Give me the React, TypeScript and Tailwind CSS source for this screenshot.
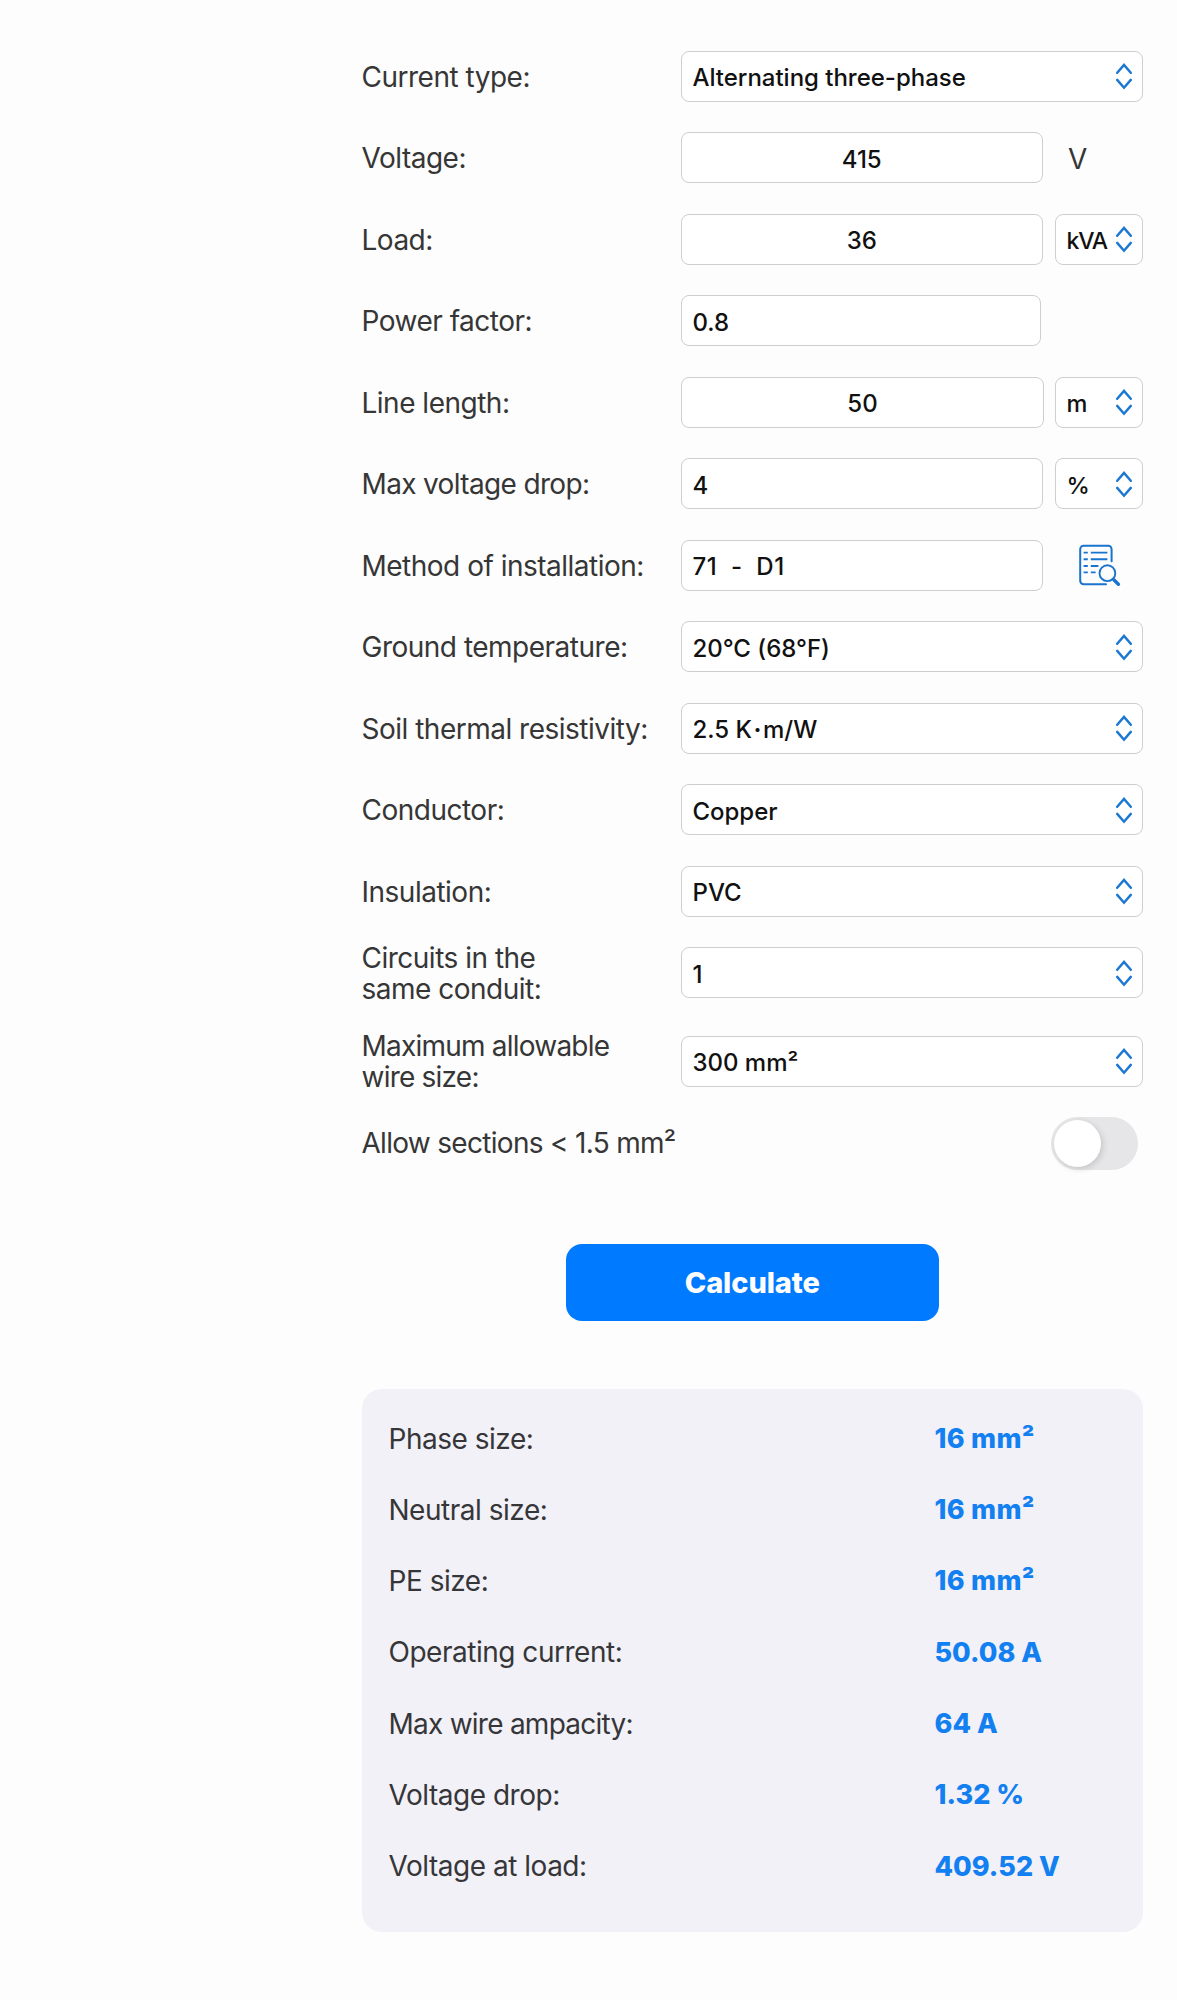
type Row = {
  label: string;
  value: string;
  // narrow input that leaves room for a unit on its right
  inputWidth?: string;
  centered?: boolean;
  unit?: string;
  extra?: "text" | "select" | "lookup";
  tall?: boolean;
  tracking?: string;
};

const rows: Row[] = [
  { label: "Current type:", value: "Alternating three-phase" },
  {
    label: "Voltage:",
    value: "415",
    inputWidth: "w-[361.5px]",
    centered: true,
    unit: "V",
    extra: "text",
  },
  {
    label: "Load:",
    value: "36",
    inputWidth: "w-[361.5px]",
    centered: true,
    unit: "kVA",
    extra: "select",
  },
  { label: "Power factor:", value: "0.8", inputWidth: "w-[360px]" },
  {
    label: "Line length:",
    value: "50",
    inputWidth: "w-[363px]",
    centered: true,
    unit: "m",
    extra: "select",
  },
  {
    label: "Max voltage drop:",
    value: "4",
    inputWidth: "w-[361.5px]",
    unit: "%",
    extra: "select",
    tracking: "tracking-[-0.65px]",
  },
  {
    label: "Method of installation:",
    value: "71  -  D1",
    inputWidth: "w-[361.5px]",
    extra: "lookup",
  },
  { label: "Ground temperature:", value: "20°C (68°F)" },
  { label: "Soil thermal resistivity:", value: "2.5 K·m/W" },
  { label: "Conductor:", value: "Copper" },
  { label: "Insulation:", value: "PVC" },
  { label: "Circuits in the\nsame conduit:", value: "1" },
  {
    label: "Maximum allowable\nwire size:",
    value: "300 mm²",
    tall: true,
    tracking: "tracking-[-0.78px]",
  },
];

const results = [
  { label: "Phase size:", value: "16 mm²" },
  { label: "Neutral size:", value: "16 mm²" },
  { label: "PE size:", value: "16 mm²" },
  { label: "Operating current:", value: "50.08 A" },
  { label: "Max wire ampacity:", value: "64 A" },
  { label: "Voltage drop:", value: "1.32 %" },
  { label: "Voltage at load:", value: "409.52 V" },
];

const Chevrons = () => (
  <svg
    className="shrink-0"
    width="18"
    height="28"
    viewBox="0 0 18 28"
    fill="none"
    stroke="#1c78d2"
    strokeWidth="2.5"
    strokeLinecap="round"
    strokeLinejoin="miter"
  >
    <path d="M2.2 10.8 9 3l6.8 7.8" />
    <path d="M2.2 17.9 9 25.7l6.8-7.8" />
  </svg>
);

const LookupIcon = () => (
  <svg width="44" height="44" viewBox="8 8 44 44" fill="none" stroke="#1a73cc">
    <path
      strokeWidth="2"
      strokeLinecap="round"
      d="M41.6 26.3V14.2a3.4 3.4 0 0 0-3.4-3.4H13.6a3.4 3.4 0 0 0-3.4 3.4V45.8a3.4 3.4 0 0 0 3.4 3.4H36"
    />
    <path
      strokeWidth="1.9"
      d="M13.6 17.6h4.2M20.8 17.6h16.6M13.6 24.3h4.2M20.8 24.3h16.6M13.6 31h4.2M20.8 31h7.6M13.6 37.4h4.2M20.8 37.4h4.8"
    />
    <circle cx="37.4" cy="38.2" r="7.9" strokeWidth="1.9" />
    <path strokeWidth="3.4" strokeLinecap="round" d="m43.8 44.8 4.6 4.4" />
  </svg>
);

const Value = ({ text }: { text: string }) => {
  const [before, after] = text.split("·");
  if (after === undefined) {
    return <span>{text}</span>;
  }
  // the product dot gets some air on both sides
  return (
    <span>
      {before}
      <span className="px-[1.5px] font-bold">·</span>
      {after}
    </span>
  );
};

const Select = ({ value, className }: { value: string; className: string }) => (
  <button
    className={`${className} h-[51px] flex justify-between items-center bg-white border border-[#cecece] rounded-lg pl-[10.5px] pr-[9px]`}
  >
    <span className="pt-[4px] whitespace-pre">
      <Value text={value} />
    </span>
    <Chevrons />
  </button>
);

const App = () => {
  return (
    <div className="w-[1177px] h-[2000px] bg-[#fdfdfd] pl-[361.5px] pr-[34px] pt-[35.75px] font-['Inter','Liberation_Sans',sans-serif]">
      {/* Form fields */}
      {rows.map((row) => (
        <div
          key={row.label}
          className={`flex items-center ${row.tall ? "h-[81.5px] mt-[7px]" : "h-[81.48px]"}`}
        >
          <div
            className={`w-[319.5px] shrink-0 pt-[2px] text-[28px] font-[420] leading-[31px] whitespace-pre text-[#363636] ${row.tracking ?? "tracking-[-0.5px]"}`}
          >
            {row.label}
          </div>
          <div className="flex flex-1 items-center justify-between text-[24px] font-[450] leading-[30px] tracking-[-0.02px] text-[#111]">
            {row.inputWidth ? (
              <div
                className={`${row.inputWidth} h-[51px] flex items-center bg-white border border-[#cecece] rounded-lg pt-[4px] whitespace-pre ${
                  row.centered ? "justify-center" : "pl-[10.5px]"
                } ${row.extra === "lookup" ? "tracking-[0.5px]" : ""}`}
              >
                {row.value}
              </div>
            ) : (
              <Select value={row.value} className="w-full" />
            )}
            {row.extra === "text" && (
              <div className="w-[75px] pt-[2px] text-[28px] font-normal text-[#363636]">
                {row.unit}
              </div>
            )}
            {row.extra === "select" && (
              <Select
                value={row.unit ?? ""}
                className={
                  row.unit === "kVA"
                    ? "w-[88px] text-[23px] tracking-[-1.1px]"
                    : "w-[88px] text-[23.5px]"
                }
              />
            )}
            {row.extra === "lookup" && (
              <button className="pr-[21px]">
                <LookupIcon />
              </button>
            )}
          </div>
        </div>
      ))}

      {/* Toggle */}
      <div className="h-[81.5px] flex items-center justify-between pt-[2px] pr-[5px]">
        <div className="pb-px text-[28px] font-[420] tracking-[-0.7px] text-[#363636]">
          Allow sections &lt; 1.5 mm²
        </div>
        <div className="w-[87px] h-[53px] rounded-full bg-[#e6e6e8] p-[3px]">
          <div className="size-[47px] rounded-full bg-white shadow-[2px_2px_6px_rgba(0,0,0,0.14)]" />
        </div>
      </div>

      <button className="block ml-[204px] mt-[60.5px] w-[373.5px] h-[77px] rounded-2xl bg-[#007aff] pt-px text-white text-[29px] font-extrabold tracking-[-0.1px]">
        Calculate
      </button>

      {/* Results */}
      <div className="ml-[0.5px] mt-[68px] h-[543px] rounded-[20px] bg-[#f2f1f8] pl-[26.5px] pt-[14px]">
        {results.map((item) => (
          <div key={item.label} className="h-[71.3px] flex items-center">
            <div
              className={`w-[546px] text-[28px] font-[420] text-[#363638] ${
                item.label.startsWith("Max")
                  ? "tracking-[-0.75px]"
                  : "tracking-[-0.48px]"
              }`}
            >
              {item.label}
            </div>
            <div
              className={`pt-px text-[27px] font-extrabold text-[#1280f0] ${
                item.value.endsWith("mm²")
                  ? "tracking-[0.3px]"
                  : "tracking-[0.02px]"
              }`}
            >
              {item.value}
            </div>
          </div>
        ))}
      </div>
    </div>
  );
};

export default App;
